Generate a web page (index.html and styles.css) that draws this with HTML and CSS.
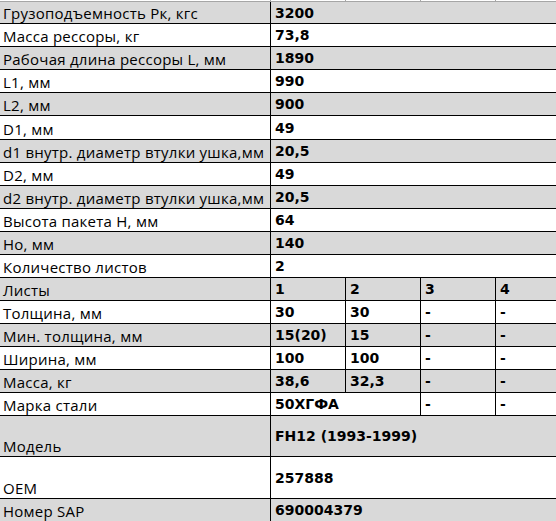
FILE: index.html
```html
<!DOCTYPE html>
<html lang="ru">
<head>
<meta charset="utf-8">
<title>Рессора</title>
<link rel="stylesheet" href="styles.css">
</head>
<body>
<table class="spec">
  <colgroup>
    <col class="c-label"><col class="c-val"><col class="c-val"><col class="c-val"><col class="c-val">
  </colgroup>
  <tr class="strip"><td></td><td></td><td></td><td></td><td></td></tr>
  <tr class="g first"><td class="lbl">Грузоподъемность Рк, кгс</td><td class="val" colspan="4">3200</td></tr>
  <tr class="w"><td class="lbl">Масса рессоры, кг</td><td class="val" colspan="4">73,8</td></tr>
  <tr class="g"><td class="lbl">Рабочая длина рессоры L, мм</td><td class="val" colspan="4">1890</td></tr>
  <tr class="w"><td class="lbl">L1, мм</td><td class="val" colspan="4">990</td></tr>
  <tr class="g"><td class="lbl">L2, мм</td><td class="val" colspan="4">900</td></tr>
  <tr class="w tall1"><td class="lbl">D1, мм</td><td class="val" colspan="4">49</td></tr>
  <tr class="g"><td class="lbl">d1 внутр. диаметр втулки ушка,мм</td><td class="val" colspan="4">20,5</td></tr>
  <tr class="w"><td class="lbl">D2, мм</td><td class="val" colspan="4">49</td></tr>
  <tr class="g"><td class="lbl">d2 внутр. диаметр втулки ушка,мм</td><td class="val" colspan="4">20,5</td></tr>
  <tr class="w"><td class="lbl">Высота пакета H, мм</td><td class="val" colspan="4">64</td></tr>
  <tr class="g"><td class="lbl">Но, мм</td><td class="val" colspan="4">140</td></tr>
  <tr class="w"><td class="lbl">Количество листов</td><td class="val" colspan="4">2</td></tr>
  <tr class="g"><td class="lbl">Листы</td><td class="val">1</td><td class="val">2</td><td class="val">3</td><td class="val">4</td></tr>
  <tr class="w"><td class="lbl">Толщина, мм</td><td class="val">30</td><td class="val">30</td><td class="val">-</td><td class="val">-</td></tr>
  <tr class="g"><td class="lbl">Мин. толщина, мм</td><td class="val">15(20)</td><td class="val">15</td><td class="val">-</td><td class="val">-</td></tr>
  <tr class="w"><td class="lbl">Ширина, мм</td><td class="val">100</td><td class="val">100</td><td class="val">-</td><td class="val">-</td></tr>
  <tr class="g"><td class="lbl">Масса, кг</td><td class="val">38,6</td><td class="val">32,3</td><td class="val">-</td><td class="val">-</td></tr>
  <tr class="w"><td class="lbl">Марка стали</td><td class="val" colspan="2">50ХГФА</td><td class="val">-</td><td class="val">-</td></tr>
  <tr class="g model"><td class="lbl">Модель</td><td class="val" colspan="4">FH12 (1993-1999)</td></tr>
  <tr class="w oem"><td class="lbl">OEM</td><td class="val" colspan="4">257888</td></tr>
  <tr class="g"><td class="lbl">Номер SAP</td><td class="val" colspan="4">690004379</td></tr>
</table>
</body>
</html>
```

FILE: styles.css
```css
html, body {
  margin: 0;
  padding: 0;
  background: #ffffff;
  overflow: hidden;
}

.spec {
  border-collapse: separate;
  border-spacing: 0;
  table-layout: fixed;
  width: 570px;
  color: #000;
}

.c-label { width: 270px; }
.c-val { width: 75px; }

.spec td {
  padding: 0;
  height: 23px;
  border-bottom: 1px solid #000;
  box-sizing: border-box;
  white-space: nowrap;
  overflow: hidden;
}

.spec .g td { background: #d9d9d9; }
.spec .w td { background: #ffffff; }

.spec .strip td {
  height: 2px;
  font-size: 0;
  line-height: 0;
  background: #ffffff;
  border-bottom: 1px solid #a6a6a6;
}
.spec .strip td + td { border-left: 1px solid #a6a6a6; }

.spec .first td { height: 22px; }
.spec .tall1 td { height: 24px; }
.spec .model td { height: 41px; }
.spec .oem td { height: 42px; }

.spec .lbl {
  font-family: "Open Sans", "Noto Sans", sans-serif;
  font-size: 15px;
  line-height: 16px;
  letter-spacing: 0.25px;
  vertical-align: bottom;
  padding: 0 0 2px 3px;
}

.spec .val {
  font-family: "DejaVu Sans", "Verdana", sans-serif;
  font-weight: bold;
  font-size: 14px;
  line-height: 16px;
  vertical-align: middle;
  padding: 0 0 0 4px;
  border-left: 1px solid #000;
}
```
